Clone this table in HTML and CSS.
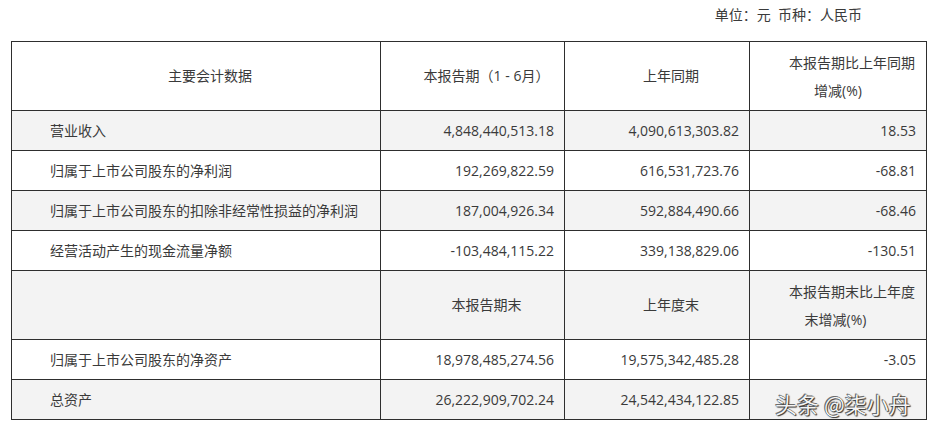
FILE: index.html
```html
<!DOCTYPE html>
<html lang="zh-CN">
<head>
<meta charset="utf-8">
<title>主要会计数据</title>
<link rel="stylesheet" href="styles.css">
</head>
<body>
<div class="page">
  <div class="unit">单位：元&nbsp;&nbsp;币种：人民币</div>
  <table class="data">
    <colgroup>
      <col class="c1"><col class="c2"><col class="c3"><col class="c4">
    </colgroup>
    <tr class="head">
      <td class="ctr">主要会计数据</td>
      <td class="ctr">本报告期（1 - 6月）</td>
      <td class="ctr">上年同期</td>
      <td class="ctr"><span class="l1">本报告期比上年同期</span><span class="l2">增减(%)</span></td>
    </tr>
    <tr class="grey">
      <td class="lbl">营业收入</td>
      <td class="num">4,848,440,513.18</td>
      <td class="num">4,090,613,303.82</td>
      <td class="num">18.53</td>
    </tr>
    <tr>
      <td class="lbl">归属于上市公司股东的净利润</td>
      <td class="num">192,269,822.59</td>
      <td class="num">616,531,723.76</td>
      <td class="num">-68.81</td>
    </tr>
    <tr class="grey">
      <td class="lbl">归属于上市公司股东的扣除非经常性损益的净利润</td>
      <td class="num">187,004,926.34</td>
      <td class="num">592,884,490.66</td>
      <td class="num">-68.46</td>
    </tr>
    <tr>
      <td class="lbl">经营活动产生的现金流量净额</td>
      <td class="num">-103,484,115.22</td>
      <td class="num">339,138,829.06</td>
      <td class="num">-130.51</td>
    </tr>
    <tr class="head grey">
      <td></td>
      <td class="ctr">本报告期末</td>
      <td class="ctr">上年度末</td>
      <td class="ctr"><span class="l1">本报告期末比上年度</span><span class="l2 l2b">末增减(%)</span></td>
    </tr>
    <tr>
      <td class="lbl">归属于上市公司股东的净资产</td>
      <td class="num">18,978,485,274.56</td>
      <td class="num">19,575,342,485.28</td>
      <td class="num">-3.05</td>
    </tr>
    <tr class="grey">
      <td class="lbl">总资产</td>
      <td class="num">26,222,909,702.24</td>
      <td class="num">24,542,434,122.85</td>
      <td class="num"></td>
    </tr>
  </table>
  <div class="mark">头条 @柒小舟</div>
</div>
</body>
</html>
```

FILE: styles.css
```css
html, body {
  margin: 0;
  padding: 0;
  background: #ffffff;
}
.page {
  position: relative;
  width: 935px;
  height: 426px;
  font-family: "Open Sans", "Noto Sans CJK SC", sans-serif;
  font-size: 14px;
  font-weight: 400;
  color: #3a3a3a;
}
.unit {
  height: 41px;
  box-sizing: border-box;
  padding: 5px 73px 0 0;
  line-height: 20px;
  text-align: right;
}
.data {
  margin-left: 11px;
  border-collapse: collapse;
  table-layout: fixed;
  width: 915px;
}
.c1 { width: 369px; }
.c2 { width: 184px; }
.c3 { width: 185px; }
.c4 { width: 177px; }
.data td {
  border: 1px solid #2e2e2e;
  height: 39px;
  padding: 0;
  line-height: 20px;
  white-space: nowrap;
  vertical-align: middle;
}
.data tr.head td {
  height: 68px;
}
.data tr.grey td {
  background: #f3f3f3;
}
.ctr {
  text-align: center;
  padding-left: 28px !important;
}
.lbl {
  padding-left: 38px !important;
}
.num {
  text-align: right;
  padding-right: 10px !important;
}
.l1, .l2 {
  display: block;
  line-height: 28px;
}
.l1 {
  margin-top: 1px;
}
.l2 {
  padding-right: 28px;
}
.l2b {
  padding-right: 33px;
}
.mark {
  position: absolute;
  left: 775px;
  top: 389px;
  font-family: "Noto Sans CJK SC", sans-serif;
  font-size: 22px;
  font-weight: 400;
  line-height: 28px;
  color: #f4f4f4;
  text-shadow: 0 0 1px #111, 1px 1px 1px #333, -1px -1px 0 #777;
}
```
